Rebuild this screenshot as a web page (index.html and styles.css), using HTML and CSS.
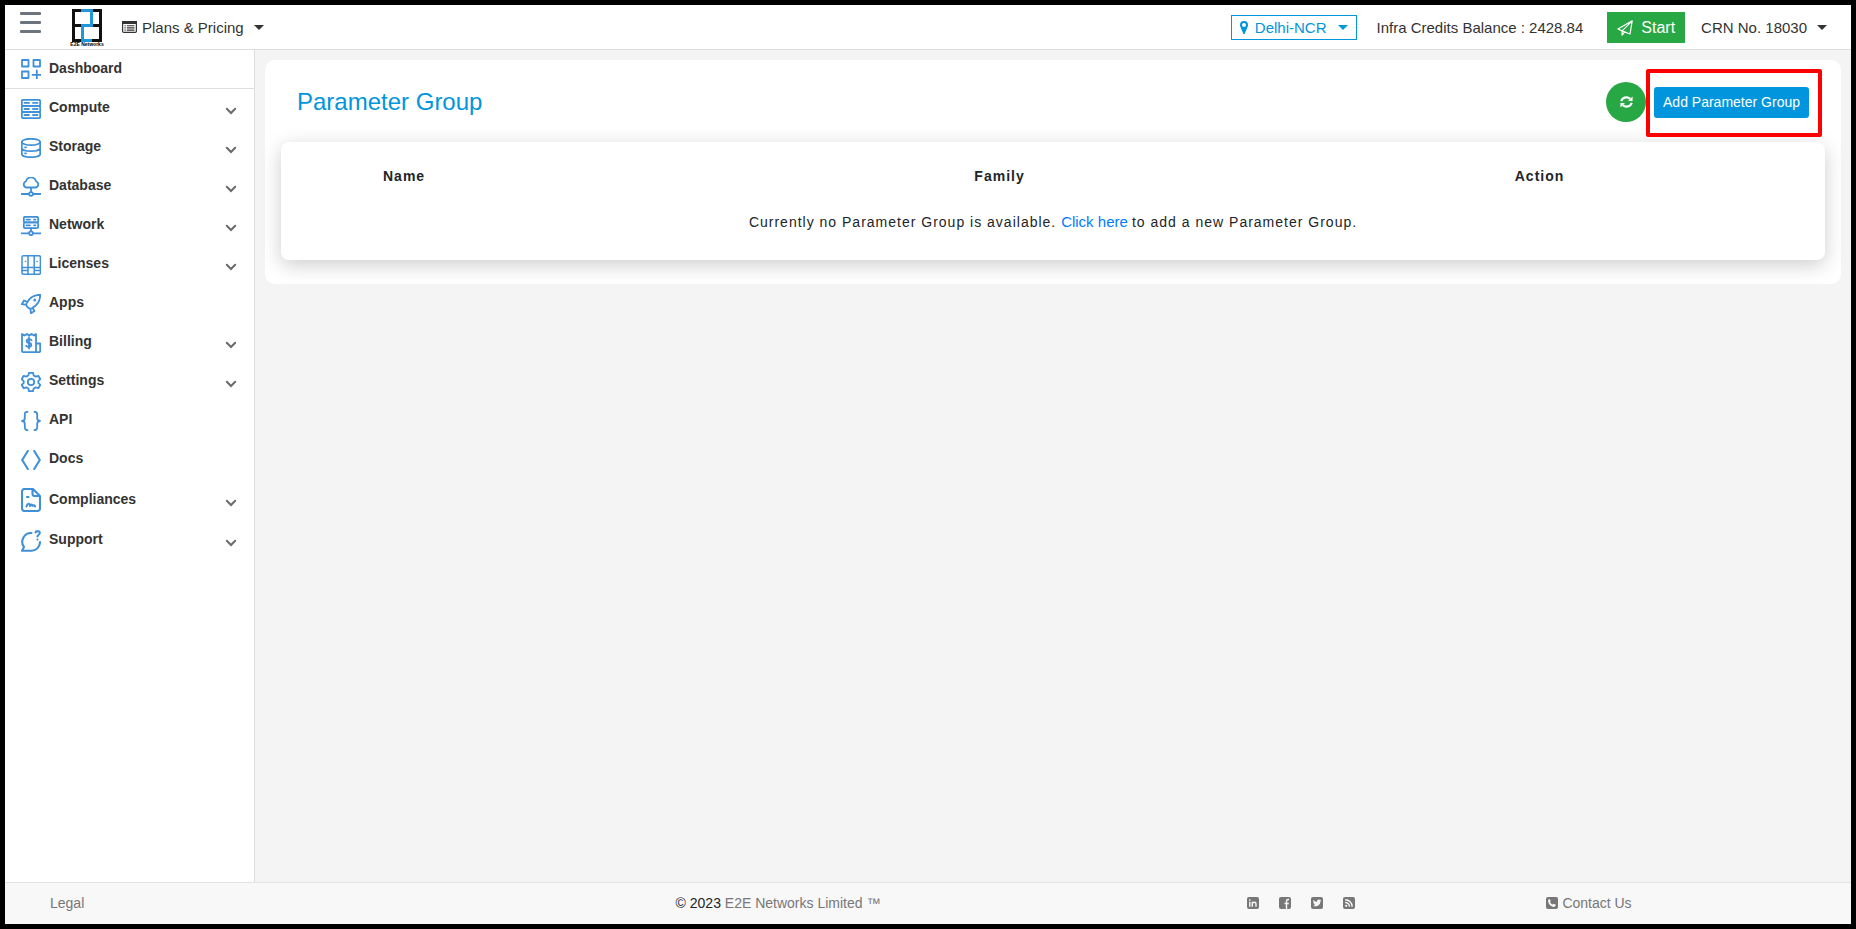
FILE: index.html
```html
<!DOCTYPE html>
<html lang="en">
<head>
<meta charset="utf-8">
<title>Parameter Group</title>
<link rel="stylesheet" href="styles.css">
</head>
<body>
<div class="app">
  <header class="topbar">
    <button class="menu-btn" aria-label="Toggle menu"><span></span><span></span><span></span></button>
    <a class="logo" href="#" aria-label="E2E Networks">
      <svg class="logo-mark" width="30" height="33" viewBox="0 0 30 33" fill="none" stroke-width="3">
        <path d="M10 1.500H1.500V31.500H10M1.500 16.500H10M20 1.500H28.500V31.500H19M28.500 16.500H19" stroke="#111"/>
        <path d="M9 1.500H19.500V16.500H10.500V31.500H20" stroke="#1f97d8"/>
      </svg>
      <span class="logo-name">E2E Networks</span>
    </a>
    <button class="nav-btn">
      <svg width="15" height="12" viewBox="0 0 15 12"><rect x=".6" y=".6" width="13.800" height="10.800" rx="1.200" fill="none" stroke="#333" stroke-width="1.200"/><path d="M0 0h15v3H0z" fill="#333"/><path d="M2.500 4.700h1.200M2.500 6.900h1.200M2.500 9.100h1.200M4.800 4.700h7.700M4.800 6.900h7.700M4.800 9.100h7.700" stroke="#333" stroke-width="1.100"/></svg>
      <span>Plans &amp; Pricing</span><i class="caret"></i>
    </button>
    <div class="topbar-right">
      <button class="region-btn">
        <svg width="8" height="13" viewBox="0 0 8 13"><path fill="currentColor" fill-rule="evenodd" d="M4 0a4 4 0 0 0-4 4c0 1 .2 1.500.5 2.100L3.200 12.400c.3.700 1.300.7 1.600 0L7.500 6.100C7.800 5.500 8 5 8 4a4 4 0 0 0-4-4zm0 2a2 2 0 1 1 0 4 2 2 0 0 1 0-4z"/></svg>
        <span>Delhi-NCR</span><i class="caret"></i>
      </button>
      <span class="credits">Infra Credits Balance : 2428.84</span>
      <button class="start-btn">
        <svg width="16" height="16" viewBox="0 0 16 16" fill="none" stroke="#fff" stroke-width="1.200" stroke-linejoin="round"><path d="M15.200.8L.9 9l4.200 1.900L13 14zM15.200.8L5.100 10.900v4.300l2.600-3.300"/></svg>
        <span>Start</span>
      </button>
      <button class="nav-btn"><span>CRN No. 18030</span><i class="caret"></i></button>
    </div>
  </header>

  <div class="body">
    <nav class="sidebar">
      <a class="item item-first" href="#"><svg class="ico" viewBox="0 0 20 20"><path d="M1 1h6.500v6.500H1zM12.500 1H19v6.500h-6.500zM1 12.500h6.500V19H1zM15.800 11.500v8.500M11.500 15.800H20"/></svg><span>Dashboard</span></a>
      <a class="item" href="#"><svg class="ico" viewBox="0 0 20 20"><rect x=".8" y=".8" width="18.400" height="6" rx="1.500"/><rect x=".8" y="6.800" width="18.400" height="6.200" rx="1.500"/><rect x=".8" y="13" width="18.400" height="6.200" rx="1.500"/><path d="M3.500 3.900h4.500M12 3.900h1.500M15 3.900h1.500M3.500 10h4.500M12 10h1.500M15 10h1.500M3.500 16h4.500M12 16h1.500M15 16h1.500"/></svg><span>Compute</span><svg class="chev" viewBox="0 0 10 6"><path d="M.8.8L5 5 9.200.8"/></svg></a>
      <a class="item" href="#"><svg class="ico" viewBox="0 0 20 20"><ellipse cx="10" cy="4" rx="9.200" ry="3.200"/><path d="M.8 4v12c0 1.800 4 3.200 9.200 3.200s9.200-1.400 9.200-3.200V4M.8 10c0 1.800 4 3.200 9.200 3.200s9.200-1.400 9.200-3.200M4 9.300h1M4 15.300h1"/></svg><span>Storage</span><svg class="chev" viewBox="0 0 10 6"><path d="M.8.8L5 5 9.200.8"/></svg></a>
      <a class="item" href="#"><svg class="ico" viewBox="0 0 20 20"><path d="M5.500 10.500a3.200 3.200 0 0 1-.6-6.200 5.300 5.300 0 0 1 10.200 0 3.200 3.200 0 0 1-.6 6.200zM10 10.500v4.700M.5 17H8M12 17h7.500"/><circle cx="10" cy="17" r="1.900"/></svg><span>Database</span><svg class="chev" viewBox="0 0 10 6"><path d="M.8.8L5 5 9.200.8"/></svg></a>
      <a class="item" href="#"><svg class="ico" viewBox="0 0 20 20"><rect x="2.800" y=".8" width="14.400" height="5.600" rx="1.500"/><rect x="2.800" y="6.400" width="14.400" height="5.800" rx="1.500"/><path d="M5.500 3.600H9M13 3.600h1.500M5.500 9.300H9M13 9.300h1.500M10 12.200v3M.5 17.300H8M12 17.300h7.500"/><circle cx="10" cy="17.300" r="1.900"/></svg><span>Network</span><svg class="chev" viewBox="0 0 10 6"><path d="M.8.8L5 5 9.200.8"/></svg></a>
      <a class="item" href="#"><svg class="ico thin" viewBox="0 0 20 20"><rect x="1" y=".8" width="18.400" height="18.400" rx="1.500"/><path d="M7 .8v18.400M13.200.8v18.400M1 12.500h18.400M1 15.500h6M13.200 15.500h6.200M4.500 6.500h.2M16 6.500h.2"/></svg><span>Licenses</span><svg class="chev" viewBox="0 0 10 6"><path d="M.8.8L5 5 9.200.8"/></svg></a>
      <a class="item" href="#"><svg class="ico" viewBox="0 0 20 20"><path d="M5.500 9.500C8 4 12.500.8 19.200.8c0 6.200-3.200 11-8.700 13.700-2.500 1-6-2.500-5-5zM6.300 7.800L3 6.500.8 10.200l4.500.6M11.500 14l2 3-3.500 2.200-.7-4.500"/><circle cx="13.800" cy="6" r=".6"/></svg><span>Apps</span></a>
      <a class="item" href="#"><svg class="ico" viewBox="0 0 20 20"><path d="M1 1l2.500 1.500L6 1l2.300 1.500L10.500 1 13 2.500 15 1v18.200H2.500A1.500 1.500 0 0 1 1 17.700zM15 10.500h4.200v7.200a1.500 1.500 0 0 1-1.500 1.500H15M10.500 7.300C10 6.300 9 6.200 8 6.200c-3 0-3 3.600 0 3.800s3 4-.2 4c-1.200 0-2-.5-2.500-1.300M8 4.500v11"/></svg><span>Billing</span><svg class="chev" viewBox="0 0 10 6"><path d="M.8.8L5 5 9.200.8"/></svg></a>
      <a class="item" href="#"><svg class="ico" viewBox="0 0 20 20"><path d="M8 .8h4l.7 2.700 2 1.100 2.600-.8 2 3.400-2 1.900v1.800l2 1.900-2 3.400-2.600-.8-2 1.100-.7 2.700H8l-.7-2.700-2-1.100-2.600.8-2-3.400 2-1.900V9.100l-2-1.900 2-3.400 2.600.8 2-1.100z"/><circle cx="10" cy="10" r="3.200"/></svg><span>Settings</span><svg class="chev" viewBox="0 0 10 6"><path d="M.8.8L5 5 9.200.8"/></svg></a>
      <a class="item" href="#"><svg class="ico" viewBox="0 0 20 20"><path d="M6.500.8C4 .8 3.800 2 3.800 3.500v3.500C3.800 9 3 10 1 10c2 0 2.800 1 2.800 3v3.500c0 1.500.2 2.700 2.700 2.700M13.500.8c2.500 0 2.700 1.200 2.700 2.700v3.500c0 2 .8 3 2.800 3-2 0-2.800 1-2.800 3v3.500c0 1.500-.2 2.700-2.700 2.700"/></svg><span>API</span></a>
      <a class="item" href="#"><svg class="ico bold" viewBox="0 0 20 20"><path d="M6.800 1L1.200 10l5.600 9M13.200 1l5.600 9-5.600 9"/></svg><span>Docs</span></a>
      <a class="item item-tall" href="#"><svg class="ico ico-tall bold" viewBox="0 0 20 24"><path d="M12 1H3.500A2.500 2.500 0 0 0 1 3.500v17A2.500 2.500 0 0 0 3.500 23h13a2.500 2.500 0 0 0 2.500-2.500V8zM11.500 1.500V6a2 2 0 0 0 2 2H18M6 9h1.500M5.500 18.500c1-3.500 3-3.500 3.500-.5 1-1.800 2-1.800 2.500-.2 1-.8 1.800-.5 2.500.5"/></svg><span>Compliances</span><svg class="chev" viewBox="0 0 10 6"><path d="M.8.8L5 5 9.200.8"/></svg></a>
      <a class="item" href="#"><svg class="ico ico-mid bold" viewBox="0 0 20 22"><path d="M10.500 3A8.800 8.800 0 0 0 3 17l-2 3.800h9.500A8.800 8.800 0 0 0 19 12M14.500 2.500C15 .8 18.800.5 18.800 3c0 1.800-2.300 1.700-2.300 3.500M16.500 9.500v.1"/></svg><span>Support</span><svg class="chev" viewBox="0 0 10 6"><path d="M.8.8L5 5 9.200.8"/></svg></a>
    </nav>

    <main class="main">
      <section class="panel">
        <div class="panel-head">
          <h1>Parameter Group</h1>
          <button class="refresh" aria-label="Refresh">
            <svg width="13" height="12" viewBox="0 0 13 12" fill="none" stroke="#fff" stroke-width="2.200"><path d="M1.300 5.200C2 2.700 4 1.400 6.500 1.400c1.500 0 2.700.5 3.700 1.500M11.700 6.800c-.7 2.500-2.700 3.800-5.200 3.800-1.500 0-2.700-.5-3.700-1.500"/><path d="M12.600.5v4.600H8zM.4 11.500V6.900H5z" fill="#fff" stroke="none"/></svg>
          </button>
          <div class="add-wrap"><button class="add-btn">Add Parameter Group</button></div>
        </div>
        <div class="table-card">
          <table>
            <thead><tr><th class="c-name">Name</th><th class="c-family">Family</th><th>Action</th></tr></thead>
            <tbody><tr><td colspan="3">Currently no Parameter Group is available. <a href="#">Click here </a>to add a new Parameter Group.</td></tr></tbody>
          </table>
        </div>
      </section>
    </main>
  </div>

  <footer class="footer">
    <div class="f-legal"><a href="#">Legal</a></div>
    <div>© 2023 <a href="#">E2E Networks Limited ™</a></div>
    <div class="social">
      <a href="#" aria-label="LinkedIn"><svg class="sq" viewBox="0 0 12 12"><rect width="12" height="12" rx="2"/><path class="w" d="M2.800 4.700v5M2.800 2.200v1.500M5.300 9.700v-5M5.300 6.500c.5-1.500 3.700-1.900 3.700.4v2.800"/></svg></a>
      <a href="#" aria-label="Facebook"><svg class="sq" viewBox="0 0 12 12"><rect width="12" height="12" rx="2"/><path class="w" d="M10 2.500H9c-1.200 0-1.500.6-1.500 1.700V12M5.500 6.500h4.300"/></svg></a>
      <a href="#" aria-label="Twitter"><svg class="sq" viewBox="0 0 12 12"><rect width="12" height="12" rx="2"/><path fill="#f8f8f8" d="M10.200 3.500l-.8.900c0 3.500-3.800 6.300-7.400 4.300 1 0 1.700-.2 2.300-.7-.8-.1-1.200-.6-1.400-1.200h.6C2.600 6.400 2.200 5.800 2.200 5l.7.200C2.200 4.500 2.100 3.600 2.500 2.900 3.500 4 4.600 4.600 6 4.700c-.3-1.900 1.800-2.800 2.900-1.700l1.100-.4-.6.900z"/></svg></a>
      <a href="#" aria-label="RSS"><svg class="sq" viewBox="0 0 12 12"><rect width="12" height="12" rx="2"/><path class="w" d="M2.200 5.500a4.300 4.300 0 0 1 4.300 4.300M2.200 2.800a7 7 0 0 1 7 7"/><circle cx="3.200" cy="8.800" r="1.100" fill="#f8f8f8"/></svg></a>
    </div>
    <div><a class="contact" href="#"><svg class="sq" viewBox="0 0 12 12"><rect width="12" height="12" rx="2"/><path fill="#f8f8f8" d="M3.700 2l1 2-.7.900c.5 1.200 1.500 2.100 2.700 2.700l1-.9 2.100 1.100c-.1 1.500-1.200 2.200-2.400 2.100C4.500 9.500 2 6.500 2.100 3.800 2.200 2.700 2.800 2 3.700 2z"/></svg>Contact Us</a></div>
  </footer>
</div>
</body>
</html>
```
FILE: styles.css
```css
*, *::before, *::after { box-sizing: border-box; }
body { margin: 0; font-family: "Liberation Sans", Arial, sans-serif; font-size: 14px; color: #212529; }
a { color: inherit; text-decoration: none; }
button { font: inherit; color: inherit; background: none; border: 0; padding: 0; cursor: pointer; }
svg { display: block; flex: none; }

.app { min-height: 100vh; display: flex; flex-direction: column; border: 5px solid #000; background: #f4f4f4; }

.topbar { display: flex; align-items: center; height: 45px; background: #fff; border-bottom: 1px solid #dedede; padding: 0 24px 0 15px; color: #333; font-size: 15px; }
.menu-btn { display: flex; flex-direction: column; gap: 6px; width: 21px; margin-bottom: 10px; }
.menu-btn span { height: 3px; border-radius: 1px; background: #6c757d; }
.logo { display: flex; flex-direction: column; align-items: center; width: 30px; margin: 2px 20px 0 31px; }
.logo-name { font-size: 5px; line-height: 5px; font-weight: bold; color: #000; white-space: nowrap; }
.nav-btn { display: flex; align-items: center; gap: 5px; white-space: nowrap; }
.caret { border: 5px solid transparent; border-top-color: currentColor; border-bottom: 0; margin-left: 5px; }
.topbar-right { display: flex; align-items: center; margin-left: auto; white-space: nowrap; }
.region-btn { display: flex; align-items: center; gap: 6px; height: 25px; padding: 0 8px; border: 1px solid #0095dc; color: #0095dc; }
.region-btn span { margin-left: 1px; }
.credits { margin: 0 24px 0 20px; }
.start-btn { display: flex; align-items: center; gap: 8px; height: 31px; padding: 1px 10px 0; margin-right: 16px; background: #28a745; color: #fff; font-size: 16px; }

.body { flex: 1; display: flex; }
.sidebar { width: 250px; flex: none; background: #fff; border-right: 1px solid #dedede; }
.item { display: flex; align-items: center; height: 39px; padding: 0 18px 0 16px; font-weight: bold; line-height: 18px; color: #333; }
.item span { margin: 0 auto 3px 8px; }
.item-first { border-bottom: 1px solid #dedede; }
.item-tall { height: 42px; }
.ico { width: 20px; height: 20px; fill: none; stroke: #3f90d8; stroke-width: 1.8; stroke-linecap: round; stroke-linejoin: round; }
.ico-tall { height: 24px; }
.ico-mid { height: 22px; }
.thin { stroke-width: 1.5; }
.bold { stroke-width: 2.1; }
.chev { width: 10px; height: 6px; margin-top: 5px; fill: none; stroke: #6a6a6a; stroke-width: 2; stroke-linecap: round; overflow: visible; }

.main { flex: 1; min-width: 0; padding: 10px; }
.panel { background: #fff; border-radius: 10px; padding: 22px 16px 24px; }
.panel-head { display: flex; align-items: center; height: 40px; margin-bottom: 20px; padding: 0 16px; }
.panel-head h1 { margin: 0 auto 0 0; font-size: 24px; font-weight: normal; color: #0095dc; }
.refresh { display: flex; align-items: center; justify-content: center; width: 40px; height: 40px; margin-right: 8px; border-radius: 50%; background: #28a745; }
.add-wrap { position: relative; }
.add-wrap::after { content: ""; position: absolute; inset: -18px -13px -19px -8px; border: 4px solid #f00; border-radius: 2px; pointer-events: none; }
.add-btn { display: block; height: 31px; padding: 0 9px; border-radius: 3px; background: #0095dc; color: #fff; white-space: nowrap; }
.table-card { padding: 16px 0; background: #fff; border-radius: 8px; box-shadow: 0 5px 20px rgba(0, 0, 0, .2); }
table { width: 100%; border-collapse: collapse; letter-spacing: 1px; }
th { height: 36px; padding: 0 0 0 102px; text-align: left; }
.c-name { width: 38.3%; }
.c-family { width: 35%; }
td { height: 50px; padding: 4px 0 0; text-align: center; }
td a { color: #007bff; font-size: 15px; letter-spacing: normal; }

.footer { display: grid; grid-template-columns: 394fr 758fr 288fr 288fr 118fr; align-items: center; height: 42px; padding-bottom: 1px; border-top: 1px solid #e2e2e2; background: #f8f8f8; text-align: center; }
.footer a { color: #777; }
.f-legal { padding-left: 45px; text-align: left; }
.social { display: flex; justify-content: center; gap: 20px; }
.sq { width: 12px; height: 12px; fill: #777; }
.w { fill: none; stroke: #f8f8f8; stroke-width: 1.4; }
.contact { display: inline-flex; align-items: center; gap: 4px; }
```
